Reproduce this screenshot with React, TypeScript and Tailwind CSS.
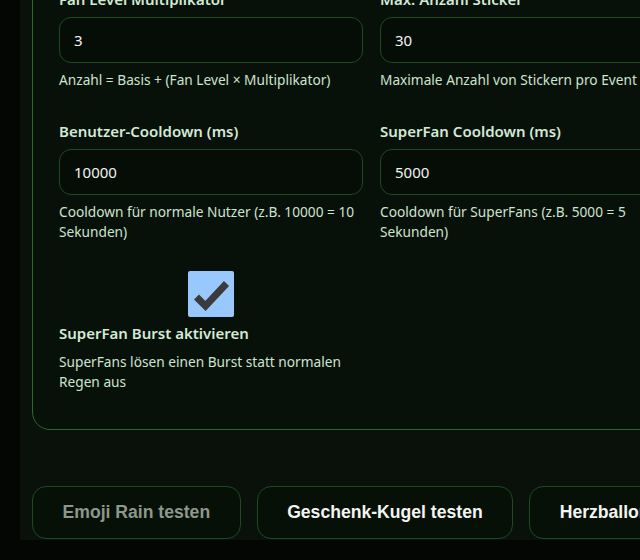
import React, { useState } from 'react'

type Field = { label: string; value: string; hint: string }

const FIELDS: Field[] = [
  { label: 'Fan Level Multiplikator', value: '3', hint: 'Anzahl = Basis + (Fan Level × Multiplikator)' },
  { label: 'Max. Anzahl Sticker', value: '30', hint: 'Maximale Anzahl von Stickern pro Event' },
  { label: 'Benutzer-Cooldown (ms)', value: '10000', hint: 'Cooldown für normale Nutzer (z.B. 10000 = 10 Sekunden)' },
  { label: 'SuperFan Cooldown (ms)', value: '5000', hint: 'Cooldown für SuperFans (z.B. 5000 = 5 Sekunden)' },
]

const font = { fontFamily: '"Noto Sans", "Open Sans", sans-serif' }

function NumberField({ f }: { f: Field }) {
  const [val, setVal] = useState(f.value)
  return (
    <div className="flex flex-col">
      <label className="text-[15px] leading-[20px] font-semibold text-[#d3ead5] mb-[8px]">{f.label}</label>
      <input value={val} onChange={e => setVal(e.target.value)}
        className="h-[46px] w-full rounded-[12px] border border-[#1d4a22] bg-[#060d07] px-[14px] text-[15px] text-[#f2f4f2] outline-none" />
      <p className="mt-[7px] text-[13.7px] leading-[20px] text-[#cde4cf]">{f.hint}</p>
    </div>
  )
}

export default function App() {
  const [burst, setBurst] = useState(true)

  return (
    <div className="min-h-screen bg-[#030603] pl-[20px] pb-[20px]" style={font}>
      <div className="h-[540px] overflow-hidden bg-[#0a110b]">
        {/* settings card, scrolled so the top rows sit above the fold */}
        <div className="ml-[12px] -mt-[38px] w-[679px] rounded-[18px] border border-[#28692d] bg-[#08100a] px-[26px] pt-[26px] pb-[37px]">
          <div className="grid grid-cols-2 gap-x-[17px] gap-y-[31px]">
            {FIELDS.map(f => <NumberField key={f.label} f={f} />)}

            <div className="flex flex-col -mt-[2px]">
              <div className="flex justify-center">
                <button onClick={() => setBurst(!burst)}
                  className={`h-[46px] w-[46px] rounded-[2px] ${burst ? 'bg-[#99c8ff]' : 'bg-[#3b3b3b]'}`}>
                  {burst && (
                    <svg viewBox="0 0 46 46" width="46" height="46">
                      <polyline points="8.5,26 17.5,35 38.5,12.5" fill="none" stroke="#3b3b3b" strokeWidth="7" />
                    </svg>
                  )}
                </button>
              </div>
              <p className="mt-[6px] text-[15px] leading-[20px] font-semibold text-[#d3ead5]">SuperFan Burst aktivieren</p>
              <p className="mt-[9px] text-[13.7px] leading-[20px] text-[#cde4cf]">SuperFans lösen einen Burst statt normalen Regen aus</p>
            </div>
          </div>
        </div>

        {/* test buttons */}
        <div className="mt-[56px] ml-[12px] flex gap-[16px] whitespace-nowrap" style={{ fontFamily: '"Liberation Sans", Arial, sans-serif' }}>
          <button disabled className="h-[53px] rounded-[14px] border border-[#1d4a22] bg-[#071007] px-[29.5px] text-[17.6px] font-bold text-[#8c978d]">
            Emoji Rain testen
          </button>
          <button className="h-[53px] rounded-[14px] border border-[#1d4a22] bg-[#071007] px-[29.5px] text-[17.6px] font-bold text-[#f3f5f3]">
            Geschenk-Kugel testen
          </button>
          <button className="h-[53px] rounded-[14px] border border-[#1d4a22] bg-[#071007] px-[29.5px] text-[17.6px] font-bold text-[#f3f5f3]">
            Herzballon testen
          </button>
        </div>
      </div>
    </div>
  )
}
